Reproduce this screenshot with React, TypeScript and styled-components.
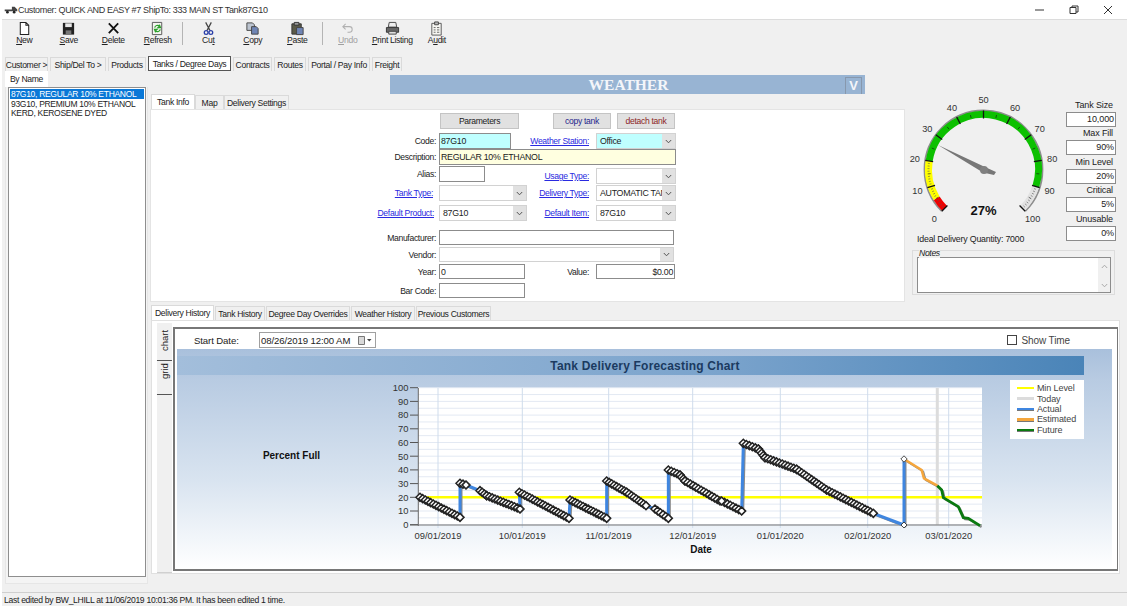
import React from 'react';
import styled, { createGlobalStyle } from 'styled-components';

const GlobalStyle = createGlobalStyle`
html, body { margin: 0; padding: 0; background: #fff; }
body {
  font-family: "Liberation Sans", Arial, sans-serif;
  font-size: 8.6px;
  letter-spacing: -0.32px;
  color: #222;
}
`;

const Window = styled.div`
  width: 1129px;
  height: 608px;
  overflow: hidden;
  background: #fff;
  display: flex;
  flex-direction: column;
`;

const TitleBar = styled.div`
  height: 19px;
  display: flex;
  align-items: center;
  padding-left: 4px;
  font-size: 9px;
  letter-spacing: -0.35px;
  color: #333;
`;

const TitleText = styled.span`
  flex: 1;
`;

const WinControls = styled.div`
  display: flex;
  width: 102px;
  margin-right: 4px;
`;

const WinBtn = styled.div`
  width: 34px;
  display: flex;
  justify-content: center;
`;

const Shell = styled.div`
  flex: 1;
  margin: 0 2px 2px 2px;
  background: #f0f0f0;
  display: flex;
  flex-direction: column;
`;

const Toolbar = styled.div`
  height: 33px;
  display: flex;
  border-top: 1px solid #dcdcdc;
`;

const ToolBtn = styled.div<{ $off?: boolean }>`
  width: 44.5px;
  display: flex;
  flex-direction: column;
  align-items: center;
  padding-top: 1px;
  color: ${p => (p.$off ? '#a0a0a0' : '#222')};
  svg { height: 15px; width: 15px; display: block; margin-bottom: -1px; }
  span { white-space: nowrap; }
  u { text-underline-offset: 1px; }
`;

const ToolSep = styled.div`
  width: 1px;
  height: 23px;
  margin: 2px 3px 0 2px;
  background: #b4b4b4;
`;

const TabStrip = styled.div<{ $left: number }>`
  display: flex;
  align-items: flex-end;
  padding-left: ${p => p.$left}px;
  gap: 2px;
`;

const Tab = styled.div<{ $w: number; $on?: boolean; $focus?: boolean }>`
  width: ${p => p.$w}px;
  height: ${p => (p.$on ? 15 : 14)}px;
  display: flex;
  align-items: center;
  justify-content: center;
  white-space: nowrap;
  background: ${p => (p.$on ? '#fff' : '#f0f0f0')};
  border: 1px solid ${p => (p.$focus ? '#555' : '#dadada')};
  border-bottom: ${p => (p.$focus ? '1px solid #555' : 'none')};
  box-sizing: border-box;
`;

const MainTabs = styled(TabStrip)`
  height: 17px;
  gap: 2px;
  margin-top: 1px;
`;

const Body = styled.div`
  flex: 1;
  display: flex;
`;

const LeftCol = styled.div`
  width: 148px;
  display: flex;
  flex-direction: column;
`;

const ByName = styled.div`
  width: 43px;
  height: 16px;
  margin-left: 3px;
  background: #fff;
  display: flex;
  align-items: center;
  justify-content: center;
`;

const ListWrap = styled.div`
  margin-left: 3px;
  background: #f4f4f4;
  border: 1px solid #e6e6e6;
  border-top: none;
  padding: 0 0 0 2px;
  height: 497px;
  width: 143px;
  box-sizing: border-box;
`;

const List = styled.div`
  width: 138px;
  height: 490px;
  box-sizing: border-box;
  border: 1px solid #8e8e8e;
  background: #fff;
  padding: 1px;
`;

const ListRow = styled.div<{ $on?: boolean }>`
  height: 9.7px;
  line-height: 10px;
  padding-left: 1px;
  white-space: nowrap;
  font-size: 8.5px;
  letter-spacing: -0.3px;
  background: ${p => (p.$on ? '#0a78d7' : 'transparent')};
  color: ${p => (p.$on ? '#fff' : '#222')};
`;

const Content = styled.div`
  flex: 1;
  display: flex;
  flex-direction: column;
`;

const Banner = styled.div`
  height: 19px;
  width: 475px;
  margin: 4px 0 0 240px;
  background: #98b4d3;
  display: flex;
  align-items: center;
`;

const BannerText = styled.div`
  flex: 1;
  padding-left: 22px;
  text-align: center;
  font-family: "Liberation Serif", serif;
  font-weight: 700;
  font-size: 15.5px;
  letter-spacing: 0;
  color: #f4f6fa;
`;

const VButton = styled.div`
  width: 15px;
  height: 16px;
  margin: 2px 3px 0 0;
  border: 1px solid #8798ad;
  border-bottom: none;
  font-size: 13px;
  font-weight: 700;
  letter-spacing: 0;
  color: #f4f6fa;
  text-align: center;
  line-height: 16px;
`;

const UpperRow = styled.div`
  display: flex;
  height: 210px;
`;

const FormCol = styled.div`
  width: 755px;
  display: flex;
  flex-direction: column;
`;

const InnerTabs = styled(TabStrip)`
  height: 15px;
  gap: 0;
  padding-left: 1px;
`;

const FormPanel = styled.div`
  flex: 1;
  background: #fff;
  border: 1px solid #e4e4e4;
  box-sizing: border-box;
  padding-top: 3px;
  margin-bottom: 2px;
`;

const ButtonRow = styled.div`
  display: flex;
  height: 16px;
  margin-left: 289px;
`;

const PushBtn = styled.div<{ $w: number; $ml?: number; $color?: string }>`
  width: ${p => p.$w}px;
  margin-left: ${p => p.$ml ?? 0}px;
  background: #e1e1e1;
  border: 1px solid #c4c4c4;
  box-sizing: border-box;
  display: flex;
  align-items: center;
  justify-content: center;
  color: ${p => p.$color ?? '#222'};
`;

const FormRow = styled.div<{ $mt?: number; $h?: number }>`
  display: grid;
  grid-template-columns: 288px 88px 69px 80px;
  height: ${p => p.$h ?? 16}px;
  margin-top: ${p => p.$mt ?? 0}px;
  align-items: stretch;
`;

const Label = styled.div<{ $pr?: number }>`
  padding-right: ${p => p.$pr ?? 3}px;
  text-align: right;
  align-self: center;
`;

const MidLabel = styled.div<{ $top?: number }>`
  padding-right: 7px;
  margin-top: ${p => p.$top ?? 0}px;
  text-align: right;
  align-self: center;
`;

const LinkLabel = styled.span`
  color: #2a2ae0;
  text-decoration: underline;
  text-underline-offset: 1px;
`;

const Input = styled.div<{ $bg?: string; $w?: number; $span?: number; $right?: boolean }>`
  width: ${p => (p.$w ? `${p.$w}px` : 'auto')};
  grid-column: ${p => (p.$span ? `span ${p.$span}` : 'auto')};
  background: ${p => p.$bg ?? '#fff'};
  border: 1px solid #8c8c8c;
  box-sizing: border-box;
  padding: 0 1px;
  display: flex;
  align-items: center;
  justify-content: ${p => (p.$right ? 'flex-end' : 'flex-start')};
  white-space: nowrap;
  overflow: hidden;
  font-size: 8.8px;
  letter-spacing: -0.28px;
`;

const SelectBox = styled.div<{ $bg?: string; $span?: number; $drop?: number; $w?: number }>`
  width: ${p => (p.$w ? `${p.$w}px` : 'auto')};
  grid-column: ${p => (p.$span ? `span ${p.$span}` : 'auto')};
  background: ${p => p.$bg ?? '#fff'};
  border: 1px solid #d2d2d2;
  box-sizing: border-box;
  display: flex;
  align-items: stretch;
  font-size: 8.8px;
  letter-spacing: -0.28px;
  overflow: hidden;
  margin-top: ${p => p.$drop ?? 0}px;
  margin-bottom: ${p => -(p.$drop ?? 0)}px;
`;

const SelectText = styled.div`
  flex: 1;
  padding-left: 3px;
  display: flex;
  align-items: center;
  white-space: nowrap;
  overflow: hidden;
`;

const SelectArrow = styled.div`
  width: 13px;
  background: #e1e1e1;
  display: flex;
  align-items: center;
  justify-content: center;
`;

const SidePanel = styled.div`
  width: 215px;
  margin-top: 4px;
  display: flex;
  flex-direction: column;
  padding-left: 7px;
  box-sizing: border-box;
`;

const GaugeRow = styled.div`
  display: flex;
  height: 135px;
`;

const GaugeSvg = styled.svg`
  width: 140px;
  height: 135px;
  margin: 0 0 0 1px;
  display: block;
  overflow: visible;
`;

const TankFields = styled.div`
  width: 50px;
  margin-left: 13px;
  display: flex;
  flex-direction: column;
  padding-top: 1px;
`;

const FieldLabel = styled.div`
  height: 13px;
  line-height: 13px;
  text-align: right;
  padding-right: 3px;
  font-size: 9px;
  letter-spacing: -0.12px;
  white-space: nowrap;
`;

const FieldInput = styled.div`
  height: 15px;
  margin-bottom: 0.4px;
  background: #fff;
  border: 1px solid #8c8c8c;
  box-sizing: border-box;
  padding-right: 1px;
  font-size: 9px;
  letter-spacing: -0.1px;
  text-align: right;
  line-height: 13px;
`;

const IdealText = styled.div`
  height: 12px;
  line-height: 12px;
  margin-left: 5px;
  font-size: 8.8px;
  letter-spacing: -0.2px;
`;

const NotesGroup = styled.div`
  position: relative;
  width: 203px;
  height: 45px;
  margin-top: 5px;
  border: 1px solid #dcdcdc;
  box-sizing: border-box;
  padding: 6px 4px 0 4px;
`;

const NotesLegend = styled.div`
  position: absolute;
  left: 6px;
  top: -3px;
  background: #f0f0f0;
  font-style: italic;
`;

const NotesBox = styled.div`
  height: 36px;
  width: 194px;
  background: #fff;
  border: 1px solid #8c8c8c;
  box-sizing: border-box;
  display: flex;
  justify-content: flex-end;
`;

const NotesScroll = styled.div`
  width: 12px;
  background: #f0f0f0;
  display: flex;
  flex-direction: column;
  justify-content: space-between;
  align-items: center;
  padding: 6px 0 4px;
`;

const LowerTabs = styled(TabStrip)`
  height: 16px;
  gap: 1px;
  padding-left: 1px;
`;

const LowerPanel = styled.div`
  margin: 0 0 0 1px;
  width: 969px;
  height: 254px;
  background: #fff;
  border: 1px solid #e0e0e0;
  box-sizing: border-box;
  padding: 2px 1px 0 5px;
  display: flex;
`;

const SideTabs = styled.div`
  width: 15px;
  background: #f0f0f0;
  display: flex;
  flex-direction: column;
  padding-top: 5px;
  border-bottom: 1px solid #d0d0d0;
`;

const SideTab = styled.div<{ $h: number }>`
  height: ${p => p.$h}px;
  display: flex;
  justify-content: flex-end;
  align-items: center;
  padding-inline-end: 2px;
  font-size: 9.5px;
  letter-spacing: 0;
  border-top: 1px solid #555;
  writing-mode: vertical-rl;
  transform: rotate(180deg);
  box-sizing: border-box;
`;

const ChartFrame = styled.div`
  width: 947px;
  height: 244px;
  margin: 4px 0 0 1px;
  border: 2px solid #777;
  border-right-width: 1px;
  box-sizing: border-box;
  background: #fff;
  display: flex;
  flex-direction: column;
`;

const DateRow = styled.div`
  height: 20px;
  display: flex;
  align-items: center;
  padding: 2px 47px 0 19px;
  font-size: 9.6px;
  letter-spacing: -0.1px;
  box-sizing: border-box;
`;

const DateLabel = styled.div`
  width: 65px;
`;

const DateBox = styled.div`
  width: 117px;
  height: 16px;
  border: 1px solid #a0a0a0;
  box-sizing: border-box;
  display: flex;
  align-items: center;
  justify-content: space-between;
  padding: 0 3px 0 1px;
  white-space: nowrap;
`;

const CheckWrap = styled.div`
  margin-left: auto;
  display: flex;
  align-items: center;
  gap: 4px;
  color: #444;
  font-size: 10px;
`;

const CheckBox = styled.div`
  width: 10px;
  height: 10px;
  background: #fff;
  border: 1px solid #444;
  box-sizing: border-box;
`;

const ChartArea = styled.div`
  position: relative;
  width: 935px;
  height: 220px;
  margin-left: 2px;
  background: linear-gradient(180deg, #a9c0dc 0%, #b8cbe2 14%, #d9e4f0 60%, #ffffff 100%);
`;

const ChartTitle = styled.div`
  position: absolute;
  left: 0;
  top: 7px;
  width: 907px;
  height: 19px;
  padding-left: 29px;
  box-sizing: border-box;
  background: linear-gradient(90deg, #a3bedb 0%, #7aa3cc 60%, #4a84b8 100%);
  color: #1b3a60;
  font-size: 12px;
  font-weight: 700;
  letter-spacing: 0.2px;
  display: flex;
  align-items: center;
  justify-content: center;
`;

const PlotSvg = styled.svg`
  position: absolute;
  inset: 0;
  width: 935px;
  height: 220px;
`;

const Legend = styled.div`
  position: absolute;
  left: 833px;
  top: 31px;
  width: 74px;
  height: 59px;
  background: #fff;
  padding: 3px 0 0 7px;
  box-sizing: border-box;
  font-size: 9px;
  letter-spacing: -0.1px;
  color: #444;
`;

const LegendRow = styled.div`
  height: 10.4px;
  display: flex;
  align-items: center;
  gap: 3px;
`;

const Swatch = styled.div<{ $color: string; $shadow?: boolean }>`
  width: 17px;
  height: 2.5px;
  background: ${p => p.$color};
  box-shadow: ${p => (p.$shadow ? '0 1px 0 #777' : 'none')};
`;

const StatusBar = styled.div`
  height: 13px;
  margin-top: 5px;
  border-top: 1px solid #cfcfcf;
  display: flex;
  align-items: center;
  padding-left: 2px;
  letter-spacing: -0.3px;
`;

const Chevron = () => (
  <svg width="7" height="5" viewBox="0 0 7 5">
    <path d="M.8 1 3.5 3.8 6.2 1" fill="none" stroke="#555" strokeWidth="1" />
  </svg>
);

const Select = ({ text, bg, span, drop, w }: { text?: string; bg?: string; span?: number; drop?: number; w?: number }) => (
  <SelectBox $bg={bg} $span={span} $drop={drop} $w={w}>
    <SelectText>{text}</SelectText>
    <SelectArrow><Chevron /></SelectArrow>
  </SelectBox>
);

const polar = (cx: number, cy: number, r: number, pct: number) => {
  const a = ((pct * 2.7 - 135) * Math.PI) / 180;
  return [cx + r * Math.sin(a), cy - r * Math.cos(a)];
};

const arc = (cx: number, cy: number, r: number, from: number, to: number) => {
  const [x1, y1] = polar(cx, cy, r, from);
  const [x2, y2] = polar(cx, cy, r, to);
  const large = (to - from) * 2.7 > 180 ? 1 : 0;
  return `M${x1} ${y1}A${r} ${r} 0 ${large} 1 ${x2} ${y2}`;
};

const Gauge = () => {
  const cx = 70.5;
  const cy = 71.5;
  const ticks = [];
  for (let i = 0; i <= 100; i++) {
    const major = i % 10 === 0;
    const mid = i % 5 === 0;
    const fine = i < 20 || i > 90;
    if (!major && !mid && !fine) continue;
    const [x1, y1] = polar(cx, cy, major ? 59 : 56, i);
    const [x2, y2] = polar(cx, cy, major ? 51 : mid ? 53 : 54, i);
    ticks.push(
      <line key={i} x1={x1} y1={y1} x2={x2} y2={y2} stroke={fine && !mid ? '#555' : '#111'} strokeWidth={major ? 1.3 : 0.6} />,
    );
  }
  const labels = [0, 10, 20, 30, 40, 50, 60, 70, 80, 90, 100].map(v => {
    const [x, y] = polar(cx, cy, 69.5, v);
    return (
      <text key={v} x={x} y={y + 3} textAnchor="middle" fontSize="9.2" fill="#333" letterSpacing="0">{v}</text>
    );
  });
  return (
    <GaugeSvg viewBox="0 0 140 135">
      <path d={arc(cx, cy, 59, 0, 100)} fill="none" stroke="#8d8d8d" strokeWidth="1.8" />
      <path d={arc(cx, cy, 55, 0, 5)} fill="none" stroke="#f00000" strokeWidth="7" />
      <path d={arc(cx, cy, 55, 5, 20)} fill="none" stroke="#ffff00" strokeWidth="7" />
      <path d={arc(cx, cy, 55, 20, 90)} fill="none" stroke="#0cc000" strokeWidth="7" />
      <path d={arc(cx, cy, 55, 90, 100)} fill="none" stroke="#e2e2e2" strokeWidth="7" />
      {ticks}
      <path d="M25 47 72 69 83 74 81 77 70 74.500Z" fill="#777" />
      <circle cx="71" cy="72" r="4" fill="#808080" />
      {labels}
      <text x="70.5" y="117" textAnchor="middle" fontSize="13" fontWeight="700" fill="#111" letterSpacing="0">27%</text>
    </GaugeSvg>
  );
};

const z6 = (x: number, y: number): [number, number] => [370 + x / 3, 375 + y / 3];
const z7 = (x: number, y: number): [number, number] => [720 + x / 3, 375 + y / 3];

const markerRuns: [number, number][][] = [
  [z6(150, 367), z6(270, 427)],
  [z6(270, 325), z6(288, 330)],
  [z6(330, 347), z6(350, 362), z6(450, 402)],
  [z6(448, 352), z6(597, 430)],
  [z6(600, 375), z6(710, 430)],
  [z6(710, 318), z6(770, 352), z6(828, 392)],
  [z6(855, 402), z6(895, 430)],
  [z6(895, 285), z6(930, 300), z6(945, 318), z6(1050, 378)],
  [z7(5, 378), z7(65, 408)],
  [z7(70, 205), z7(115, 222), z7(135, 248), z7(230, 283), z7(320, 345), z7(460, 415)],
];

const walk = (run: [number, number][], step: number) => {
  const pts: [number, number][] = [];
  for (let i = 0; i < run.length - 1; i++) {
    const [x1, y1] = run[i];
    const [x2, y2] = run[i + 1];
    const n = Math.max(1, Math.round(Math.hypot(x2 - x1, y2 - y1) / step));
    for (let k = 0; k <= n; k++) pts.push([x1 + ((x2 - x1) * k) / n, y1 + ((y2 - y1) * k) / n]);
  }
  return pts;
};

const actual = [
  z6(150, 367), z6(270, 427), z6(270, 325), z6(288, 330), z6(330, 347), z6(450, 402), z6(448, 352),
  z6(597, 430), z6(600, 375), z6(710, 430), z6(710, 318), z6(828, 392), z6(850, 400), z6(895, 430),
  z6(895, 285), z6(1050, 378), z7(65, 408), z7(70, 205), z7(460, 415), z7(552, 450), z7(552, 252),
];
const estimated = [z7(552, 252), z7(605, 285), z7(612, 310), z7(652, 332)];
const future = [
  z7(652, 332), z7(665, 345), z7(670, 368), z7(715, 395), z7(730, 428), z7(745, 430), z7(780, 452),
];

const toPts = (p: [number, number][]) => p.map(q => q.join(',')).join(' ');

const MONTHS: [number, string][] = [
  [438, '09/01/2019'], [522.3, '10/01/2019'], [608.7, '11/01/2019'], [692.7, '12/01/2019'],
  [780.3, '01/01/2020'], [867.7, '02/01/2020'], [948.7, '03/01/2020'],
];

const yOf = (p: number) => 524.7 - 1.37 * p;

const ENDS: [number, number][] = [
  z6(288, 330), z6(270, 427), z6(450, 402), z6(597, 430), z6(710, 430), z6(828, 392), z6(895, 430),
  z7(5, 378), z7(65, 408), z7(460, 415),
];

const Diamond = ({ x, y, r, w }: { x: number; y: number; r: number; w: number }) => (
  <polygon points={`${x - r},${y} ${x},${y - r} ${x + r},${y} ${x},${y + r}`} fill="#fff" stroke="#222" strokeWidth={w} />
);

const PlotChart = () => {
  const rows = [];
  for (let p = 0; p <= 100; p += 5) {
    rows.push(<line key={p} x1="418" x2="982" y1={yOf(p)} y2={yOf(p)} stroke="#e3e9f3" strokeWidth="1" />);
  }
  const yLabels = [];
  for (let p = 0; p <= 100; p += 10) {
    yLabels.push(
      <g key={p}>
        <line x1="410" x2="418" y1={yOf(p)} y2={yOf(p)} stroke="#555" />
        <text x="408.5" y={yOf(p) + 3.3} textAnchor="end" fontSize="9.4" fill="#333" letterSpacing="0">{p}</text>
      </g>,
    );
  }
  return (
    <PlotSvg viewBox="0 0 935 220">
      <g transform="translate(-177,-349)">
        <rect x="418" y="388" width="564" height="137" fill="#fff" />
        {rows}
        {MONTHS.map(([x]) => (
          <line key={x} x1={x} x2={x} y1="388" y2="528" stroke="#cfdcec" strokeWidth="1" />
        ))}
        <line x1="937.3" x2="937.3" y1="388" y2="525" stroke="#dcdcdc" strokeWidth="3" />
        <line x1="418" x2="982" y1={yOf(20)} y2={yOf(20)} stroke="#ffff00" strokeWidth="2.5" />
        <line x1="418.3" x2="418.3" y1="388" y2="526" stroke="#666" strokeWidth="1" />
        <line x1="410" x2="982" y1="525" y2="525" stroke="#777" strokeWidth="1.2" />
        {yLabels}
        {MONTHS.map(([x, t]) => (
          <text key={t} x={x} y="539" textAnchor="middle" fontSize="9.4" fill="#333" letterSpacing="0">{t}</text>
        ))}
        <text x="701" y="553" textAnchor="middle" fontSize="10" fontWeight="700" fill="#111" letterSpacing="0">Date</text>
        <text x="291.5" y="459" textAnchor="middle" fontSize="10" fontWeight="700" fill="#111" letterSpacing="0">Percent Full</text>

        <g fill="none" strokeLinejoin="round" transform="translate(1.5,1.5)" stroke="#8a8a8a" strokeWidth="2">
          <polyline points={toPts(actual)} />
          <polyline points={toPts(estimated)} />
          <polyline points={toPts(future)} />
        </g>
        <polyline points={toPts(actual)} fill="none" stroke="#3f86e0" strokeWidth="3" />
        <polyline points={toPts(estimated)} fill="none" stroke="#f5a63c" strokeWidth="2.6" />
        <polyline points={toPts(future)} fill="none" stroke="#0a7a10" strokeWidth="2.8" />
        {markerRuns.map((run, i) =>
          walk(run, 3).map(([x, y], j) => <Diamond key={`${i}-${j}`} x={x} y={y} r={4} w={1.5} />),
        )}
        {ENDS.map(([x, y]) => <Diamond key={`${x}-${y}`} x={x} y={y} r={3.6} w={1.1} />)}
        <Diamond x={z7(552, 252)[0]} y={z7(552, 252)[1]} r={3.2} w={.8} />
        <Diamond x={z7(552, 450)[0]} y={z7(552, 450)[1]} r={3} w={.8} />
      </g>
    </PlotSvg>
  );
};

const icons: Record<string, React.ReactNode> = {
  new: <path d="M3.5 1.5h6l3 3v10h-9zM9.5 1.5v3h3" fill="#fff" stroke="#222" strokeWidth="1.1" />,
  save: (
    <>
      <path d="M2 2h12v12.500H2z" fill="#222" />
      <path d="M4.500 2.500h7v4h-7z" fill="#e8e8e8" />
      <path d="M5 10h6v4.500H5z" fill="#777" />
    </>
  ),
  del: <path d="M3 2.500 13 13M13 2.500 3 13" stroke="#111" strokeWidth="1.9" fill="none" />,
  refresh: (
    <>
      <path d="M2.500 1.500h10v13h-10z" fill="#f4f4f0" stroke="#555" />
      <path d="M5 7a3 3 0 0 1 5-1.500V4l1.200 3H8.500l1-1M11 9a3 3 0 0 1-5 1.500V12L4.800 9h2.700l-1 1" fill="none" stroke="#2aa02a" strokeWidth="1.300" />
    </>
  ),
  cut: (
    <>
      <path d="M5 1.500 9.500 10M11 1.500 6.500 10" stroke="#444" strokeWidth="1.300" fill="none" />
      <circle cx="5.500" cy="12.300" r="2" fill="none" stroke="#2a3fa8" strokeWidth="1.400" />
      <circle cx="10.500" cy="12.300" r="2" fill="none" stroke="#2a3fa8" strokeWidth="1.400" />
    </>
  ),
  copy: (
    <>
      <path d="M2 2h6l2 2v6H2z" fill="#bcc4d0" stroke="#444" />
      <path d="M7 6h5l2 2v6H7z" fill="#6f85b5" stroke="#444" />
    </>
  ),
  paste: (
    <>
      <path d="M2 3h10v11H2z" fill="#5a5a48" stroke="#333" />
      <path d="M4.500 1.500h5v3h-5z" fill="#999" stroke="#333" />
      <path d="M7 7h7v7.500H7z" fill="#6f85b5" stroke="#444" />
    </>
  ),
  undo: <path d="M3.500 6H10a3 3 0 0 1 0 6H8M6 3 3 6l3 3" fill="none" stroke="#b0b0b0" strokeWidth="1.100" />,
  print: (
    <>
      <path d="M4.500 1.500h7l1 5h-9z" fill="#eee" stroke="#444" />
      <path d="M1.500 7h13v5h-13z" fill="#666" stroke="#333" />
      <path d="M4 11h8v3H4z" fill="#ddd" stroke="#444" />
    </>
  ),
  audit: (
    <>
      <path d="M3 2.500h10v12.500H3z" fill="#f6f6f2" stroke="#555" />
      <path d="M6 1h4v3H6z" fill="#bbb" stroke="#444" />
      <path d="M5 7h2M8.500 7H11M5 9.500h2M8.500 9.500H11M5 12h2M8.500 12H11" stroke="#555" strokeWidth=".9" />
    </>
  ),
};

const ToolButton = ({ icon, pre, key_, post, off }: { icon: string; pre?: string; key_: string; post?: string; off?: boolean }) => (
  <ToolBtn $off={off}>
    <svg viewBox="0 0 16 16">{icons[icon]}</svg>
    <span>{pre}<u>{key_}</u>{post}</span>
  </ToolBtn>
);

export default function App() {
  return (
    <Window>
      <GlobalStyle />
      <TitleBar>
        <svg width="14" height="9" viewBox="0 0 14 10">
          <path d="M0 5h8V2h3l3 3v2H0z" fill="#444" />
          <circle cx="3" cy="8" r="1.500" fill="#222" />
          <circle cx="10.500" cy="8" r="1.500" fill="#222" />
        </svg>
        <TitleText>Customer: QUICK AND EASY #7 ShipTo: 333 MAIN ST Tank87G10</TitleText>
        <WinControls>
          <WinBtn><svg width="10" height="10" viewBox="0 0 10 10"><path d="M0 5h9" stroke="#333" /></svg></WinBtn>
          <WinBtn><svg width="10" height="10" viewBox="0 0 10 10"><path d="M1 2.500h6v6H1zM3 2.500V1h6v6H7" fill="none" stroke="#333" /></svg></WinBtn>
          <WinBtn><svg width="10" height="10" viewBox="0 0 10 10"><path d="M1 1l8 8M9 1 1 9" stroke="#333" /></svg></WinBtn>
        </WinControls>
      </TitleBar>
      <Shell>
        <Toolbar>
          <ToolButton icon="new" key_="N" post="ew" />
          <ToolButton icon="save" key_="S" post="ave" />
          <ToolButton icon="del" key_="D" post="elete" />
          <ToolButton icon="refresh" key_="R" post="efresh" />
          <ToolSep />
          <ToolButton icon="cut" pre="Cu" key_="t" />
          <ToolButton icon="copy" key_="C" post="opy" />
          <ToolButton icon="paste" key_="P" post="aste" />
          <ToolSep />
          <ToolButton icon="undo" key_="U" post="ndo" off />
          <ToolButton icon="print" key_="P" post="rint Listing" />
          <ToolButton icon="audit" pre="A" key_="u" post="dit" />
        </Toolbar>
        <MainTabs $left={3}>
          <Tab $w={43}>Customer &gt;</Tab>
          <Tab $w={56}>Ship/Del To &gt;</Tab>
          <Tab $w={38}>Products</Tab>
          <Tab $w={83} $on $focus>Tanks / Degree Days</Tab>
          <Tab $w={39}>Contracts</Tab>
          <Tab $w={32}>Routes</Tab>
          <Tab $w={62}>Portal / Pay Info</Tab>
          <Tab $w={30}>Freight</Tab>
        </MainTabs>
        <Body>
          <LeftCol>
            <ByName>By Name</ByName>
            <ListWrap>
              <List>
                <ListRow $on>87G10, REGULAR 10% ETHANOL</ListRow>
                <ListRow>93G10, PREMIUM 10% ETHANOL</ListRow>
                <ListRow>KERD, KEROSENE DYED</ListRow>
              </List>
            </ListWrap>
          </LeftCol>
          <Content>
            <Banner>
              <BannerText>WEATHER</BannerText>
              <VButton>V</VButton>
            </Banner>
            <UpperRow>
              <FormCol>
                <InnerTabs $left={1}>
                  <Tab $w={44} $on>Tank Info</Tab>
                  <Tab $w={29}>Map</Tab>
                  <Tab $w={65}>Delivery Settings</Tab>
                </InnerTabs>
                <FormPanel>
                  <ButtonRow>
                    <PushBtn $w={79}>Parameters</PushBtn>
                    <PushBtn $w={58} $ml={34} $color="#26268c">copy tank</PushBtn>
                    <PushBtn $w={58} $ml={6} $color="#8c2626">detach tank</PushBtn>
                  </ButtonRow>
                  <FormRow $mt={4}>
                    <Label>Code:</Label>
                    <Input $bg="#bfffff" $w={72}>87G10</Input>
                    <MidLabel><LinkLabel>Weather Station:</LinkLabel></MidLabel>
                    <Select text="Office" bg="#bfffff" />
                  </FormRow>
                  <FormRow>
                    <Label>Description:</Label>
                    <Input $bg="#ffffe0" $span={3}>REGULAR 10% ETHANOL</Input>
                  </FormRow>
                  <FormRow $mt={1}>
                    <Label>Alias:</Label>
                    <Input $w={46} />
                    <MidLabel $top={4}><LinkLabel>Usage Type:</LinkLabel></MidLabel>
                    <Select drop={2} />
                  </FormRow>
                  <FormRow $mt={3}>
                    <Label $pr={6}><LinkLabel>Tank Type:</LinkLabel></Label>
                    <Select />
                    <MidLabel><LinkLabel>Delivery Type:</LinkLabel></MidLabel>
                    <Select text="AUTOMATIC TANK" />
                  </FormRow>
                  <FormRow $mt={4}>
                    <Label $pr={5}><LinkLabel>Default Product:</LinkLabel></Label>
                    <Select text="87G10" />
                    <MidLabel><LinkLabel>Default Item:</LinkLabel></MidLabel>
                    <Select text="87G10" />
                  </FormRow>
                  <FormRow $mt={9} $h={15}>
                    <Label>Manufacturer:</Label>
                    <Input $span={3} $w={235} />
                  </FormRow>
                  <FormRow $mt={2} $h={15}>
                    <Label>Vendor:</Label>
                    <Select span={3} w={235} />
                  </FormRow>
                  <FormRow $mt={2} $h={15}>
                    <Label>Year:</Label>
                    <Input $w={86}>0</Input>
                    <MidLabel>Value:</MidLabel>
                    <Input $right $w={79}>$0.00</Input>
                  </FormRow>
                  <FormRow $mt={4} $h={15}>
                    <Label>Bar Code:</Label>
                    <Input $w={86} />
                  </FormRow>
                </FormPanel>
              </FormCol>
              <SidePanel>
                <GaugeRow>
                  <Gauge />
                  <TankFields>
                    <FieldLabel>Tank Size</FieldLabel>
                    <FieldInput>10,000</FieldInput>
                    <FieldLabel>Max Fill</FieldLabel>
                    <FieldInput>90%</FieldInput>
                    <FieldLabel>Min Level</FieldLabel>
                    <FieldInput>20%</FieldInput>
                    <FieldLabel>Critical</FieldLabel>
                    <FieldInput>5%</FieldInput>
                    <FieldLabel>Unusable</FieldLabel>
                    <FieldInput>0%</FieldInput>
                  </TankFields>
                </GaugeRow>
                <IdealText>Ideal Delivery Quantity: 7000</IdealText>
                <NotesGroup>
                  <NotesLegend>Notes</NotesLegend>
                  <NotesBox>
                    <NotesScroll>
                      <svg width="7" height="5" viewBox="0 0 7 5"><path d="M.8 4 3.500 1.200 6.200 4" fill="none" stroke="#aaa" /></svg>
                      <svg width="7" height="5" viewBox="0 0 7 5"><path d="M.8 1 3.500 3.800 6.200 1" fill="none" stroke="#aaa" /></svg>
                    </NotesScroll>
                  </NotesBox>
                </NotesGroup>
              </SidePanel>
            </UpperRow>
            <LowerTabs $left={1}>
              <Tab $w={63} $on>Delivery History</Tab>
              <Tab $w={50}>Tank History</Tab>
              <Tab $w={84}>Degree Day Overrides</Tab>
              <Tab $w={64}>Weather History</Tab>
              <Tab $w={75}>Previous Customers</Tab>
            </LowerTabs>
            <LowerPanel>
              <SideTabs>
                <SideTab $h={33}>chart</SideTab>
                <SideTab $h={34}>grid</SideTab>
              </SideTabs>
              <ChartFrame>
                <DateRow>
                  <DateLabel>Start Date:</DateLabel>
                  <DateBox>
                    08/26/2019 12:00 AM
                    <svg width="14" height="9" viewBox="0 0 14 9">
                      <path d="M.5.500h6v8h-6z" fill="#d8d8d8" stroke="#777" />
                      <path d="M9 3h4.500l-2.250 2.500z" fill="#444" />
                    </svg>
                  </DateBox>
                  <CheckWrap>
                    <CheckBox />
                    Show Time
                  </CheckWrap>
                </DateRow>
                <ChartArea>
                  <ChartTitle>Tank Delivery Forecasting Chart</ChartTitle>
                  <PlotChart />
                  <Legend>
                    <LegendRow><Swatch $color="#ffff00" />Min Level</LegendRow>
                    <LegendRow><Swatch $color="#dcdcdc" />Today</LegendRow>
                    <LegendRow><Swatch $color="#3f86e0" $shadow />Actual</LegendRow>
                    <LegendRow><Swatch $color="#f5a63c" $shadow />Estimated</LegendRow>
                    <LegendRow><Swatch $color="#0a7a10" $shadow />Future</LegendRow>
                  </Legend>
                </ChartArea>
              </ChartFrame>
            </LowerPanel>
          </Content>
        </Body>
        <StatusBar>Last edited by BW_LHILL at 11/06/2019 10:01:36 PM. It has been edited 1 time.</StatusBar>
      </Shell>
    </Window>
  );
}
